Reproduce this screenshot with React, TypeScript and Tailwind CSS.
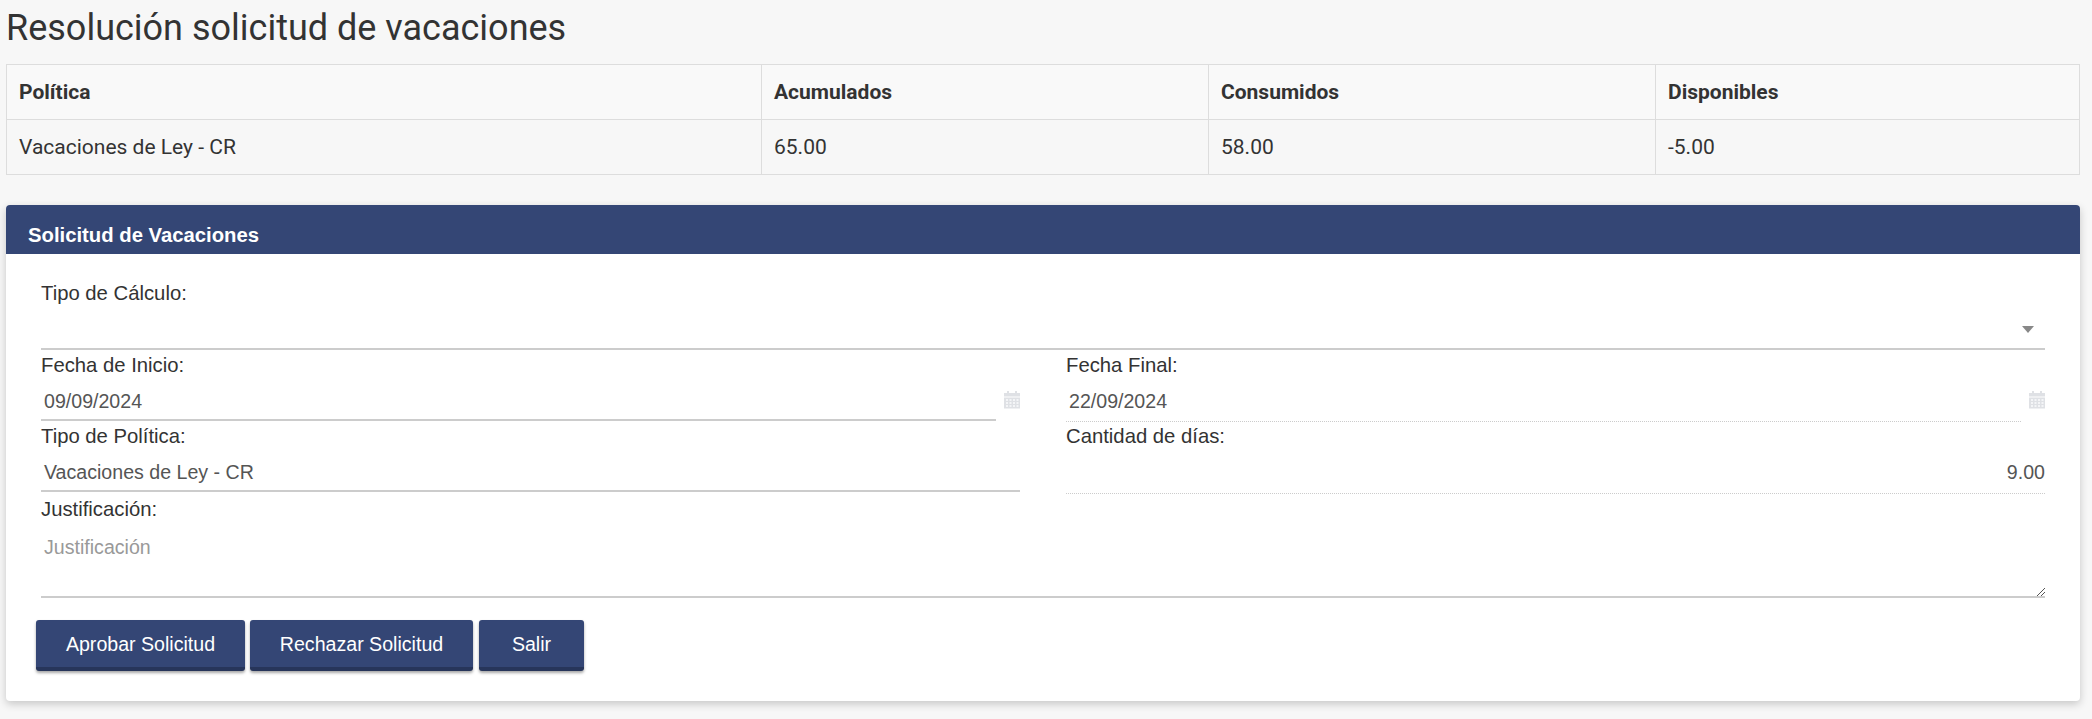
function CalendarIcon() {
  return (
    <svg viewBox="0 0 16 18" className="h-[18px] w-4 shrink-0 text-[#dfe1e5]" fill="currentColor">
      <rect x="0" y="2" width="16" height="3.5" />
      <rect x="3" y="0" width="2" height="3" />
      <rect x="11" y="0" width="2" height="3" />
      <rect x="0" y="6.5" width="16" height="11" />
      <g fill="#f4f5f7">
        <rect x="2" y="8" width="2" height="2" />
        <rect x="5.5" y="8" width="2" height="2" />
        <rect x="9" y="8" width="2" height="2" />
        <rect x="12.5" y="8" width="2" height="2" />
        <rect x="2" y="11" width="2" height="2" />
        <rect x="5.5" y="11" width="2" height="2" />
        <rect x="9" y="11" width="2" height="2" />
        <rect x="12.5" y="11" width="2" height="2" />
        <rect x="2" y="14" width="2" height="2" />
        <rect x="5.5" y="14" width="2" height="2" />
        <rect x="9" y="14" width="2" height="2" />
        <rect x="12.5" y="14" width="2" height="2" />
      </g>
    </svg>
  )
}

function Label({ text }: { text: string }) {
  return <label className="mt-[6px] block h-[19px] text-[20.3px] leading-[19px] text-[#333]">{text}</label>
}

const cellClass = "h-[55px] border border-[#ddd] px-3 pt-[2px] text-left text-[21px]"
const valueClass = "px-[3px] pt-[14px] text-[19.6px] leading-[24px] text-[#555]"
const buttonClass = "h-[51px] rounded-[3px] border-b-4 border-[#27355a] bg-[#344675] pt-[2px] text-[19.6px] text-white shadow-[0_2px_3px_rgba(0,0,0,0.35)]"

export default function App() {
  return (
    <div className="min-h-[719px] bg-[#f7f7f7] px-[6px] font-['Roboto',sans-serif] text-[#333]">
      <h1 className="h-[64px] pt-[4px] text-[36px] leading-[48px] font-normal">Resolución solicitud de vacaciones</h1>

      <table className="w-[2074px] table-fixed border-collapse">
        <thead>
          <tr className="bg-[#f9f9f9]">
            <th className={`${cellClass} w-[755px] font-bold`}>Política</th>
            <th className={`${cellClass} w-[447px] font-bold`}>Acumulados</th>
            <th className={`${cellClass} w-[447px] font-bold`}>Consumidos</th>
            <th className={`${cellClass} font-bold`}>Disponibles</th>
          </tr>
        </thead>
        <tbody>
          <tr>
            <td className={cellClass}>Vacaciones de Ley - CR</td>
            <td className={cellClass}>65.00</td>
            <td className={cellClass}>58.00</td>
            <td className={cellClass}>-5.00</td>
          </tr>
        </tbody>
      </table>

      <section className="mt-[30px] h-[496px] w-[2074px] rounded-[4px] bg-white font-['Liberation_Sans',sans-serif] shadow-[0_3px_8px_rgba(0,0,0,0.2)]">
        <div className="h-[49px] rounded-t-[4px] bg-[#344675] px-[22px] pt-[18px] text-[20.3px] leading-[24px] font-bold text-white">
          Solicitud de Vacaciones
        </div>

        <div className="px-[35px] pt-[24px]">
          <Label text="Tipo de Cálculo:" />
          <div className="flex h-[47px] items-center justify-end border-b-2 border-[#ccc] pt-[8px] pr-[11px]">
            <span className="h-0 w-0 border-x-[6px] border-t-[7px] border-x-transparent border-t-[#888]" />
          </div>

          <div className="grid grid-cols-2 gap-x-[46px]">
            <div className="h-[71px]">
              <Label text="Fecha de Inicio:" />
              <div className="flex gap-2">
                <div className={`${valueClass} h-[46px] flex-1 border-b-2 border-[#ccc]`}>09/09/2024</div>
                <div className="flex h-[46px] items-center pt-[4px]"><CalendarIcon /></div>
              </div>
            </div>
            <div className="h-[71px]">
              <Label text="Fecha Final:" />
              <div className="flex gap-2">
                <div className={`${valueClass} h-[47px] flex-1 border-b border-dotted border-[#ccc]`}>22/09/2024</div>
                <div className="flex h-[46px] items-center pt-[4px]"><CalendarIcon /></div>
              </div>
            </div>
            <div className="h-[73px]">
              <Label text="Tipo de Política:" />
              <div className={`${valueClass} h-[46px] border-b-2 border-[#ccc]`}>Vacaciones de Ley - CR</div>
            </div>
            <div className="h-[73px]">
              <Label text="Cantidad de días:" />
              <div className={`${valueClass} h-[48px] border-b border-dotted border-[#ccc] !px-0 text-right`}>9.00</div>
            </div>
          </div>

          <Label text="Justificación:" />
          <div className="relative h-[79px] border-b-2 border-[#ccc] px-[3px] pt-[16px] text-[19.6px] leading-[24px] text-[#999]">
            Justificación
            <svg viewBox="0 0 8 8" className="absolute right-0 bottom-0 h-2 w-2 text-[#555]" stroke="currentColor" fill="none">
              <path d="M8 0L0 8M8 4L4 8" />
            </svg>
          </div>

          <div className="mt-[22px] -ml-[5px] flex gap-[5px]">
            <button className={`${buttonClass} w-[209px]`}>Aprobar Solicitud</button>
            <button className={`${buttonClass} w-[223px]`}>Rechazar Solicitud</button>
            <button className={`${buttonClass} ml-[1px] w-[105px]`}>Salir</button>
          </div>
        </div>
      </section>
    </div>
  )
}
